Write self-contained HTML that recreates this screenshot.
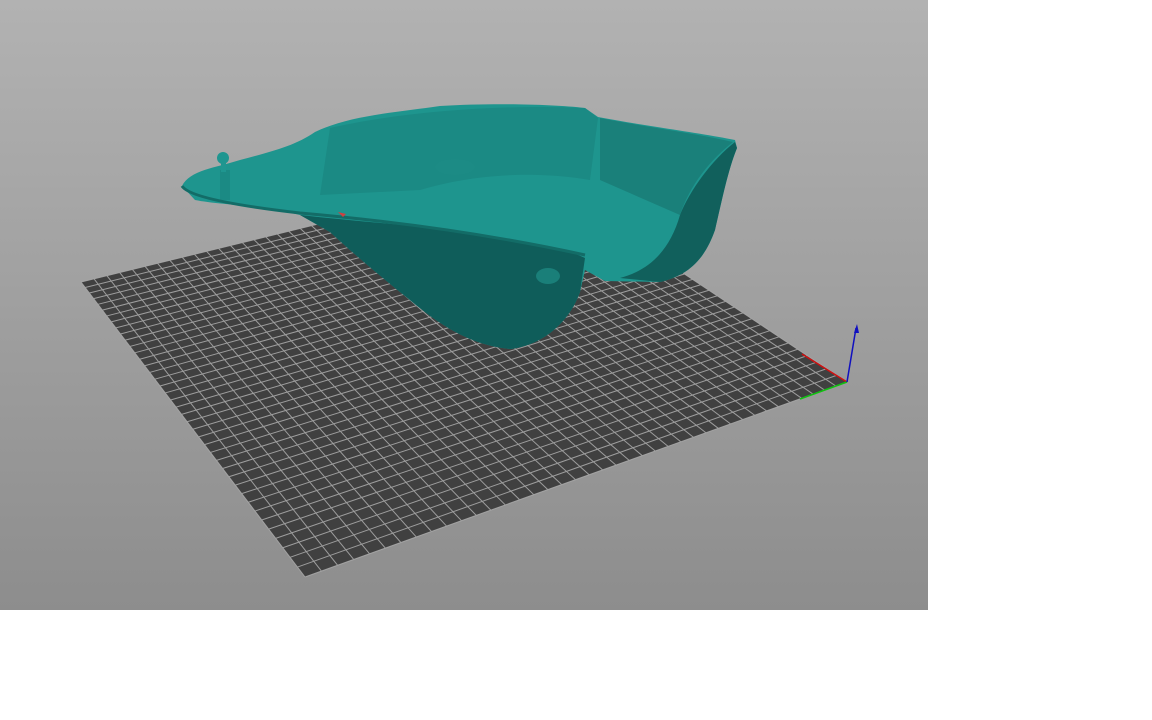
<!DOCTYPE html>
<html><head><meta charset="utf-8"><style>
html,body{margin:0;padding:0;background:#fff;width:1152px;height:720px;overflow:hidden}
#vp{position:absolute;left:0;top:0;width:928px;height:610px;background:linear-gradient(#b2b2b2,#8d8d8d)}
svg{position:absolute;left:0;top:0}
</style></head><body>
<div id="vp"></div>
<svg width="928" height="610" viewBox="0 0 928 610">
<polygon points="81,282 531,172 847,382 305,577" fill="#404040"/>
<g id="grid" stroke="#a8a8a8" stroke-width="1" opacity="0.9"></g>
<path d="M182,186 C190,170 215,168 240,160 C270,152 295,146 315,132 C350,115 400,112 440,106 C490,103 550,104 585,108 L598,117 C640,125 700,133 735,140 L737,148 C728,170 722,200 715,230 C705,258 690,275 660,282 L605,281 L585,270 L580,292 C570,320 545,345 510,349 C470,345 440,325 410,300 C385,280 355,255 330,232 L300,215 C260,205 220,205 195,200 Z" fill="#1e958e"/>
<path d="M300,215 C360,222 420,225 480,235 C530,242 565,248 585,258 L580,292 C570,320 545,345 510,349 C470,345 440,325 410,300 C385,280 355,255 330,232 Z" fill="#0f5d5a"/>
<path d="M737,148 C728,170 722,200 715,230 C705,258 690,275 660,282 L620,278 C650,270 670,250 680,215 C690,190 712,160 735,142 Z" fill="#11605c"/>
<path d="M600,118 C640,126 700,134 733,142 C710,160 690,185 680,215 L600,180 Z" fill="#1a807a"/>
<path d="M330,128 C400,112 500,104 585,108 L598,118 L590,180 C530,170 470,175 420,190 L320,195 Z" fill="#1b8a84"/>
<ellipse cx="455" cy="167" rx="20" ry="8" fill="#1c8b85"/>
<ellipse cx="548" cy="276" rx="12" ry="8" fill="#1a7f79"/>
<rect x="220" y="170" width="10" height="30" fill="#1b8a84"/>
<circle cx="223" cy="158" r="6" fill="#1f9690"/>
<rect x="221" y="158" width="5" height="14" fill="#1f9690"/>
<path d="M182,186 C188,196 230,205 300,213 C380,220 480,232 585,255" stroke="#136c67" stroke-width="3" fill="none"/>
<path d="M338,212 l8,2 l-3,3z" fill="#d04040"/>
<line x1="847" y1="382" x2="802" y2="354" stroke="#d01010" stroke-width="1.5"/>
<line x1="847" y1="382" x2="800" y2="399" stroke="#10c010" stroke-width="1.5"/>
<line x1="847" y1="382" x2="856" y2="328" stroke="#1010c0" stroke-width="1.5"/>
<polygon points="857,324 854,333 859,333" fill="#1010c0"/>
</svg>
<script>
var x0=81,y0=282,x1=531,y1=172,x2=847,y2=382,x3=305,y3=577;
var dx1=x1-x2,dx2=x3-x2,dy1=y1-y2,dy2=y3-y2,sx=x0-x1+x2-x3,sy=y0-y1+y2-y3;
var det=dx1*dy2-dx2*dy1;
var g_=(sx*dy2-dx2*sy)/det,h_=(dx1*sy-sx*dy1)/det;
var a=x1-x0+g_*x1,b=x3-x0+h_*x3,c=x0,d=y1-y0+g_*y1,e=y3-y0+h_*y3,f=y0;
function P(u,v){var w=g_*u+h_*v+1;return [(a*u+b*v+c)/w,(d*u+e*v+f)/w];}
var N=40,s='';
for(var i=0;i<=N;i++){var t=i/N;
var p=P(t,0),q=P(t,1);s+='<line x1="'+p[0]+'" y1="'+p[1]+'" x2="'+q[0]+'" y2="'+q[1]+'"/>';
p=P(0,t);q=P(1,t);s+='<line x1="'+p[0]+'" y1="'+p[1]+'" x2="'+q[0]+'" y2="'+q[1]+'"/>';}
document.getElementById('grid').innerHTML=s;
</script>
</body></html>
